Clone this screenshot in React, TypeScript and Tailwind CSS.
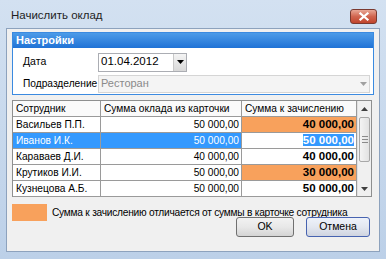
import React from "react";

const rows = [
  { name: "Васильев П.П.", card: "50 000,00", pay: "40 000,00", diff: true },
  { name: "Иванов И.К.", card: "50 000,00", pay: "50 000,00", diff: false, sel: true },
  { name: "Караваев Д.И.", card: "40 000,00", pay: "40 000,00", diff: false },
  { name: "Крутиков И.И.", card: "50 000,00", pay: "30 000,00", diff: true },
  { name: "Кузнецова А.Б.", card: "50 000,00", pay: "50 000,00", diff: false },
];

export default function App() {
  return (
    <div
      className="w-[386px] h-[259px] flex flex-col bg-gradient-to-b from-[#d3e1f1] to-[#bcd0e8] text-[10.2px] text-black overflow-hidden"
      style={{ fontFamily: '"Liberation Sans", Arial, sans-serif' }}
    >
      {/* title bar */}
      <div className="h-[28px] flex items-start shrink-0">
        <div className="pl-[11px] pt-[7px] text-[11.5px] text-[#1e1e1e] flex-1">Начислить оклад</div>
        <div className="mt-[9px] mr-[9px] w-[27px] h-[15px] rounded-[3px] border border-[#7a3a30] bg-gradient-to-b from-[#e8a796] via-[#d0654f] to-[#c0442c] flex items-center justify-center">
          <svg width="10" height="9" viewBox="0 0 10 9">
            <path d="M1.5 1.5 L8.5 7.5 M8.5 1.5 L1.5 7.5" stroke="#ffffff" strokeWidth="2.2" strokeLinecap="square" />
          </svg>
        </div>
      </div>
      {/* client */}
      <div className="mx-[6px] mb-[7px] flex-1 border border-[#8da2bd] bg-[#f0f0f0] flex flex-col px-[5px] pt-[3px]">
        {/* group */}
        <div className="h-[63px] border border-[#3b8ae0] bg-white flex flex-col shrink-0">
          <div className="h-[15px] bg-gradient-to-b from-[#4c9be8] to-[#1f72d6] text-white font-bold text-[11px] leading-[15px] pl-[3px]">
            Настройки
          </div>
          <div className="flex items-center h-[22px] mt-[3px]">
            <div className="w-[85px] pl-[10px] text-[10.5px]">Дата</div>
            <div className="w-[89px] h-[19px] border border-[#abadb3] flex items-center bg-white">
              <div className="flex-1 pl-[2px] text-[11.5px]">01.04.2012</div>
              <div className="w-[13px] h-[17px] bg-gradient-to-b from-[#f4f4f4] to-[#d8d8d8] border-l border-[#c8c8c8] flex items-center justify-center">
                <svg width="7" height="4" viewBox="0 0 7 4"><path d="M0 0 L7 0 L3.5 4 Z" fill="#000" /></svg>
              </div>
            </div>
          </div>
          <div className="flex items-center h-[19px] mt-[1px]">
            <div className="w-[85px] pl-[10px]">Подразделение</div>
            <div className="w-[272px] h-[18px] border border-[#d5d5d5] bg-[#f4f4f4] flex items-center">
              <div className="flex-1 pl-[2px] text-[#8a8a8a] text-[11px]">Ресторан</div>
              <div className="w-[12px] flex items-center justify-center">
                <svg width="7" height="4" viewBox="0 0 7 4"><path d="M0 0 L7 0 L3.5 4 Z" fill="#a0a0a0" /></svg>
              </div>
            </div>
          </div>
        </div>
        {/* table */}
        <div className="mt-[5px] w-[360px] h-[97px] border border-[#8e8f8f] bg-white flex shrink-0">
          <div className="flex flex-col w-[344px]">
            <div className="flex h-[16px] border-b border-[#9a9a9a] bg-[#fafafa]">
              <div className="w-[88px] pl-[3px] border-r border-[#9a9a9a] leading-[15px]">Сотрудник</div>
              <div className="w-[141px] pl-[3px] border-r border-[#9a9a9a] leading-[15px]">Сумма оклада из карточки</div>
              <div className="w-[115px] pl-[3px] border-r border-[#9a9a9a] leading-[15px]">Сумма к зачислению</div>
            </div>
            {rows.map((r) => (
              <div key={r.name} className="flex h-[16px] border-b border-[#9a9a9a]">
                <div
                  className={`w-[88px] pl-[3px] border-r border-[#9a9a9a] leading-[15px] ${r.sel ? "bg-[#3399ff] text-white" : ""}`}
                >
                  {r.name}
                </div>
                <div
                  className={`w-[141px] pr-[2px] text-right border-r border-[#9a9a9a] leading-[15px] ${r.sel ? "bg-[#3399ff] text-white" : ""}`}
                >
                  {r.card}
                </div>
                <div
                  className={`w-[115px] pr-[2px] text-right border-r border-[#9a9a9a] leading-[15px] font-bold text-[11.5px] ${r.diff ? "bg-[#f8a15c]" : "bg-white"}`}
                >
                  {r.sel ? <span className="bg-[#3399ff] text-white">{r.pay}</span> : r.pay}
                </div>
              </div>
            ))}
          </div>
          {/* scrollbar */}
          <div className="w-[15px] flex flex-col bg-[#f0f0f0] border-l border-[#e0e0e0]">
            <div className="h-[16px] flex items-center justify-center">
              <svg width="7" height="4" viewBox="0 0 7 4"><path d="M0 4 L7 4 L3.5 0 Z" fill="#404040" /></svg>
            </div>
            <div className="mx-[1px] h-[45px] rounded-[2px] border border-[#a8a8a8] bg-gradient-to-r from-[#f4f4f4] to-[#e2e2e2] flex flex-col items-center justify-center gap-[2px]">
              <div className="w-[6px] h-px bg-[#8a8a8a]" />
              <div className="w-[6px] h-px bg-[#8a8a8a]" />
              <div className="w-[6px] h-px bg-[#8a8a8a]" />
            </div>
            <div className="flex-1" />
            <div className="h-[15px] flex items-center justify-center">
              <svg width="7" height="4" viewBox="0 0 7 4"><path d="M0 0 L7 0 L3.5 4 Z" fill="#404040" /></svg>
            </div>
          </div>
        </div>
        {/* legend */}
        <div className="mt-[7px] flex items-center h-[17px] shrink-0">
          <div className="w-[35px] h-[17px] bg-[#f8a15c]" />
          <div className="ml-[5px] whitespace-nowrap tracking-[-0.25px]">Сумма к зачислению отличается от суммы в карточке сотрудника</div>
        </div>
        {/* buttons */}
        <div className="-mt-[4px] flex justify-end gap-[12px] pr-[4px]">
          <button className="w-[58px] h-[20px] rounded-[3px] border border-[#707070] bg-gradient-to-b from-[#f2f2f2] via-[#e8e8e8] to-[#d4d4d4] text-[10.5px]">
            OK
          </button>
          <button className="w-[64px] h-[20px] rounded-[3px] border border-[#4763b0] bg-gradient-to-b from-[#eef2fa] via-[#e3e7f0] to-[#cfd4e0] text-[10.5px]">
            Отмена
          </button>
        </div>
      </div>
    </div>
  );
}
